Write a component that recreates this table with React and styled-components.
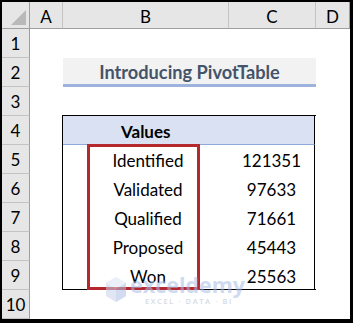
import React from "react";
import styled, { createGlobalStyle } from "styled-components";

const Global = createGlobalStyle`
  html, body { margin: 0; padding: 0; background: #000; }
  #root { width: 353px; height: 323px; overflow: hidden; }
`;

const Frame = styled.div`
  width: 353px;
  height: 323px;
  box-sizing: border-box;
  padding: 2px 3px 4px 2px;
  background: #000;
`;

const Sheet = styled.div`
  position: relative;
  display: grid;
  grid-template-columns: 28px 33px 166px 87px 34px;
  grid-template-rows: 27px repeat(10, 29px);
  width: 348px;
  height: 317px;
  overflow: hidden;
  background: #fff;
  font-family: Lato, "Open Sans", sans-serif;
  color: #000;
`;

const Corner = styled.div`
  background: #e6e6e6;
  border-right: 1px solid #9e9e9e;
  border-bottom: 1px solid #9e9e9e;
  box-sizing: border-box;
  position: relative;
  &::after {
    content: "";
    position: absolute;
    right: 3px;
    bottom: 3px;
    width: 0;
    height: 0;
    border-left: 15px solid transparent;
    border-bottom: 15px solid #b9b9b9;
  }
`;

const ColHead = styled.div`
  background: #e6e6e6;
  border-right: 1px solid ${(p) => (p.$last ? "#9e9e9e" : "#c3c3c3")};
  border-bottom: 1px solid #9e9e9e;
  box-sizing: border-box;
  display: flex;
  align-items: center;
  justify-content: center;
  font-size: 17px;
  padding-top: 3px;
`;

const RowHead = styled.div`
  background: #e6e6e6;
  border-right: 1px solid #9e9e9e;
  border-bottom: 1px solid #c3c3c3;
  box-sizing: border-box;
  display: flex;
  align-items: flex-end;
  justify-content: center;
  font-size: 17px;
  padding-bottom: 3px;
  grid-column: 1;
`;

const TitleCell = styled.div`
  grid-column: 3 / span 2;
  grid-row: 3;
  background: #f2f2f2;
  border-bottom: 3px solid #9db3dd;
  box-sizing: border-box;
  display: flex;
  align-items: center;
  justify-content: center;
  color: #44546a;
  font-weight: 700;
  font-size: 18.2px;
  padding-top: 2px;
`;

const Pivot = styled.div`
  grid-column: 3 / span 2;
  grid-row: 5 / span 6;
  display: grid;
  grid-template-columns: 166px 86px;
  grid-template-rows: repeat(6, 29px);
  border: 1px solid #000;
  border-right: none;
  box-sizing: border-box;
  width: 254px;
  height: 175px;
  margin-left: -1px;
  margin-top: -1px;
  position: relative;
`;

const PivotHeader = styled.div`
  grid-column: 1 / span 2;
  background: #d9e1f2;
  border-bottom: 1px solid #8ea9db;
  border-right: 1px solid #000;
  box-sizing: border-box;
  display: flex;
  align-items: center;
  padding-left: 58px;
  font-weight: 700;
  font-size: 17px;
  padding-top: 2px;
`;

const LabelCell = styled.div`
  display: flex;
  align-items: center;
  justify-content: center;
  font-size: 17px;
  padding-left: 4px;
  padding-top: 1px;
`;

const ValueCell = styled.div`
  display: flex;
  align-items: center;
  justify-content: center;
  font-size: 17px;
  border-right: 1px solid #000;
  padding-top: 1px;
`;

const Highlight = styled.div`
  position: absolute;
  left: 24px;
  top: 28px;
  width: 113px;
  height: 146px;
  border: 3px solid #b5282e;
  box-sizing: border-box;
  pointer-events: none;
`;

const Watermark = styled.div`
  position: absolute;
  left: 103px;
  top: 272px;
  display: flex;
  align-items: center;
  gap: 3px;
  opacity: 0.55;
  pointer-events: none;
`;

const WmText = styled.div`
  display: flex;
  flex-direction: column;
  line-height: 1;
`;

const WmBrand = styled.span`
  font-family: "Open Sans", sans-serif;
  font-weight: 700;
  font-size: 21.5px;
  color: #a9bde6;
`;

const WmTag = styled.span`
  font-family: "Open Sans", sans-serif;
  font-weight: 600;
  font-size: 7.5px;
  color: #b4bdcc;
  letter-spacing: 1.6px;
  margin-left: 15px;
  margin-top: 2px;
`;

const Logo = () => (
  <svg width="22" height="30" viewBox="0 0 22 30">
    <polygon points="11,2 21,8 21,21 11,27 1,21 1,8" fill="#c9d3ec" />
    <polygon points="11,2 21,8 11,14 1,8" fill="#dde4f4" />
    <polygon points="11,14 21,8 21,21 11,27" fill="#aebfe3" />
  </svg>
);

const rows = [
  ["Identified", "121351"],
  ["Validated", "97633"],
  ["Qualified", "71661"],
  ["Proposed", "45443"],
  ["Won", "25563"],
];

export default function App() {
  return (
    <Frame>
      <Global />
      <Sheet>
        <Corner />
        <ColHead>A</ColHead>
        <ColHead>B</ColHead>
        <ColHead>C</ColHead>
        <ColHead $last>D</ColHead>
        {Array.from({ length: 10 }, (_, i) => (
          <RowHead key={i} style={{ gridRow: i + 2 }}>
            {i + 1}
          </RowHead>
        ))}
        <TitleCell>Introducing PivotTable</TitleCell>
        <Pivot>
          <PivotHeader>Values</PivotHeader>
          {rows.map(([l, v]) => (
            <React.Fragment key={l}>
              <LabelCell>{l}</LabelCell>
              <ValueCell>{v}</ValueCell>
            </React.Fragment>
          ))}
          <Highlight />
        </Pivot>
        <Watermark>
          <Logo />
          <WmText>
            <WmBrand>exceldemy</WmBrand>
            <WmTag>EXCEL · DATA · BI</WmTag>
          </WmText>
        </Watermark>
      </Sheet>
    </Frame>
  );
}
